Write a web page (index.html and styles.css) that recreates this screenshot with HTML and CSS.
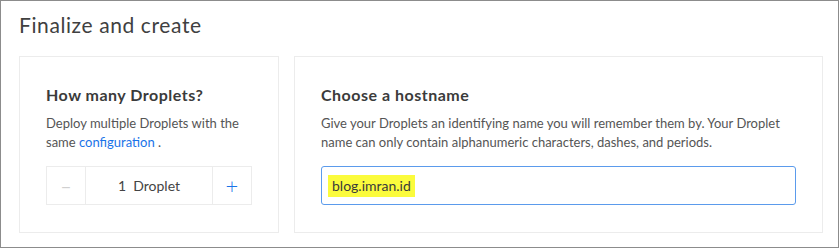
FILE: index.html
```html
<!DOCTYPE html>
<html lang="en">
<head>
    <meta charset="UTF-8">
    <meta name="viewport" content="width=device-width, initial-scale=1.0">
    <title>Finalize and create</title>
    <link rel="stylesheet" href="styles.css">
</head>
<body>
    <div class="frame">
        <h1 class="title">Finalize and create</h1>

        <div class="cards">
            <!-- Droplet count -->
            <div class="card count-card">
                <h2>How many Droplets?</h2>
                <p class="desc">Deploy multiple Droplets with the same <a href="#">configuration</a> .</p>
                <div class="stepper">
                    <button class="step minus">&minus;</button>
                    <div class="step-value">1&nbsp; Droplet</div>
                    <button class="step plus">+</button>
                </div>
            </div>

            <!-- Hostname -->
            <div class="card host-card">
                <h2>Choose a hostname</h2>
                <p class="desc">Give your Droplets an identifying name you will remember them by. Your Droplet name can only contain alphanumeric characters, dashes, and periods.</p>
                <div class="host-input">
                    <span class="mark">blog.imran.id</span>
                </div>
            </div>
        </div>
    </div>
</body>
</html>
```

FILE: styles.css
```css
* {
    box-sizing: border-box;
}
body {
    margin: 0;
    background: #fff;
    font-family: Lato, "Open Sans", sans-serif;
    color: #333;
}
.frame {
    width: 839px;
    height: 248px;
    border: 1px solid #8c8c8c;
    padding: 0 15px 0 18px;
}
.title {
    margin: 10px 0 17px;
    font-size: 21px;
    line-height: 28px;
    font-weight: 400;
    letter-spacing: 0.6px;
    color: #404040;
}
.cards {
    display: flex;
    gap: 15px;
    height: 177px;
}
.card {
    border: 1px solid #ececec;
    padding: 28px 26px 0;
}
.count-card {
    width: 260px;
}
.host-card {
    flex: 1;
}
.card h2 {
    margin: 0;
    font-size: 16px;
    line-height: 20px;
    font-weight: 700;
    letter-spacing: 0.5px;
    color: #3b3b3b;
}
.desc {
    margin: 9px 0 0;
    font-size: 13px;
    line-height: 19px;
    color: #555;
}
.desc a {
    color: #1a73e8;
    text-decoration: none;
}
.stepper {
    display: flex;
    margin-top: 14px;
    height: 39px;
    border: 1px solid #ececec;
}
.step {
    width: 39px;
    border: none;
    background: #fff;
    font-family: inherit;
    padding: 0;
    cursor: pointer;
}
.minus {
    color: #d0d0d0;
    font-size: 18px;
    border-right: 1px solid #ececec;
}
.plus {
    color: #1a73e8;
    font-size: 22px;
    font-weight: 300;
    border-left: 1px solid #ececec;
}
.step-value {
    flex: 1;
    display: flex;
    align-items: center;
    justify-content: center;
    font-size: 14px;
    color: #444;
}
.host-input {
    margin-top: 14px;
    height: 39px;
    border: 1px solid #5b9bec;
    border-radius: 3px;
    display: flex;
    align-items: center;
    padding-left: 6px;
}
.mark {
    background: #fbfb3c;
    font-size: 14px;
    color: #3a3a3a;
    padding: 3px 4px;
    line-height: 16px;
}
```
